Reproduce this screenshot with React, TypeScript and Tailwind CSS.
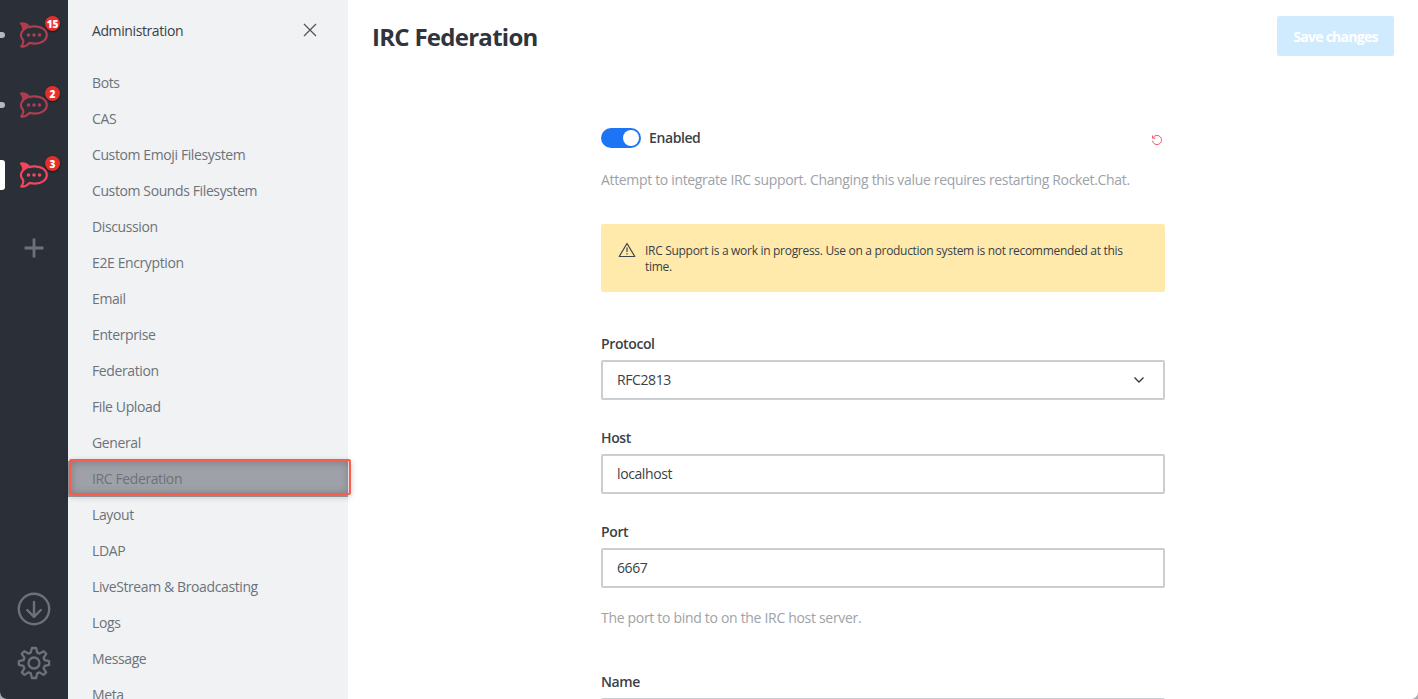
import { useState } from 'react';

const menu = [
  'Bots', 'CAS', 'Custom Emoji Filesystem', 'Custom Sounds Filesystem', 'Discussion', 'E2E Encryption',
  'Email', 'Enterprise', 'Federation', 'File Upload', 'General', 'IRC Federation', 'Layout', 'LDAP',
  'LiveStream & Broadcasting', 'Logs', 'Message', 'Meta',
];

function Rocket() {
  return (
    <svg width="30" height="28" viewBox="0 0 30 28" fill="none" stroke="#f5455c" strokeLinejoin="round">
      <path
        d="M2 1.500C5.400 1.200 8.600 2.800 10.200 5.100C12 4.500 14 4.300 16 4.400C23 4.600 27.800 8.200 27.800 13C27.800 17.900 22.800 21.600 16 21.600C14 21.600 12.200 21.400 10.400 20.900C8.200 23.200 5 25 2.200 24.400C3.800 22.500 4.700 20.100 4.100 17.900C2.600 16.300 1.900 14.800 1.900 12.900C1.900 11 2.900 9.400 4.300 7.900C4.600 5.300 3.600 3 2 1.500Z"
        strokeWidth="2.200"
      />
      <path d="M2.500 1.800C5 1.800 8 3.400 9.700 5.400L5 8.200C5.200 5.400 4.500 3.400 2.500 1.800Z" fill="#f5455c" strokeWidth="0.800" />
      <g fill="#f5455c" stroke="none">
        <circle cx="9.500" cy="13" r="1.800" />
        <circle cx="15" cy="13" r="1.800" />
        <circle cx="20.500" cy="13" r="1.800" />
      </g>
    </svg>
  );
}

function Server({ count, active = false }: { count: number; active?: boolean }) {
  return (
    <div className="relative flex h-[70px] w-full items-center justify-center">
      <span
        className={
          active
            ? 'absolute left-0 top-[20px] h-[30px] w-[5px] rounded-r-[3px] bg-white'
            : 'absolute left-0 top-[32px] h-[6px] w-[5px] rounded-r-[3px] bg-[#b4b7bb]'
        }
      />
      <span className={active ? 'pt-[1px]' : 'pt-[1px] opacity-65'}>
        <Rocket />
      </span>
      <span className="absolute left-[45px] top-[16px] flex h-[15px] w-[15px] items-center justify-center rounded-full bg-[#e5302a] font-['Open_Sans',sans-serif] text-[10px] font-extrabold leading-none text-white shadow-[0_1px_2px_rgba(0,0,0,0.5)]">
        {count}
      </span>
    </div>
  );
}

function Field({ label, value, select = false }: { label: string; value: string; select?: boolean }) {
  return (
    <div className="h-[94px]">
      <label className="block h-[26px] text-[14px] font-semibold leading-[20px] tracking-[-0.380px] text-[#3a3f48]">{label}</label>
      <div className="flex h-10 items-center justify-between rounded-[2px] border-2 border-[#cbced1] pl-[14px] pr-[18px] text-[14px] tracking-[-0.400px] text-[#3a3f48]">
        <span className="pb-[2px]">{value}</span>
        {select && (
          <svg width="12" height="8" viewBox="0 0 12 8" fill="none" stroke="#2f343d" strokeWidth="1.300">
            <path d="M1.500 1.500L6 6L10.500 1.500" />
          </svg>
        )}
      </div>
    </div>
  );
}

export default function App() {
  const [selected, setSelected] = useState('IRC Federation');
  return (
    <div className="h-[699px] w-full overflow-hidden bg-[#a9abae] font-['Open_Sans','Noto_Sans',sans-serif]">
      <div className="flex h-full overflow-hidden rounded-b-[7px] bg-white">
        <aside className="flex w-[68px] shrink-0 flex-col items-center bg-[#2b2f38]">
          <Server count={15} />
          <Server count={2} />
          <Server count={3} active />
          <svg className="mt-[28px]" width="20" height="20" viewBox="0 0 20 20" stroke="#6c727a" strokeWidth="2.800">
            <path d="M10 .500V19.500M.500 10H19.500" />
          </svg>
          <div className="mt-auto flex flex-col items-center gap-5 pb-[19px]">
            <svg width="34" height="34" viewBox="0 0 34 34" fill="none" stroke="#6c727a" strokeWidth="2.400" strokeLinecap="round" strokeLinejoin="round">
              <circle cx="17" cy="17" r="15.200" />
              <path d="M17 10V24.500M10.200 18L17 24.800L23.800 18" />
            </svg>
            <svg width="34" height="34" viewBox="0 0 34 34" fill="none" stroke="#6c727a" strokeWidth="2.300" strokeLinejoin="round">
              <path d="M14.900 2H19.100L20.300 6.600L22.600 7.600L26.700 5.200L29.300 7.800L26.600 11.700L27.600 14.200L32.100 15.100V18.900L27.600 19.900L26.600 22.400L29.200 26.300L26.500 28.900L22.600 26.400L20.200 27.400L19.100 32H14.900L13.800 27.400L11.400 26.400L7.500 28.900L4.800 26.300L7.400 22.400L6.400 19.900L1.900 18.900V15.100L6.400 14.200L7.400 11.700L4.700 7.800L7.300 5.200L11.400 7.600L13.700 6.600Z" />
              <circle cx="17" cy="17" r="5.500" />
            </svg>
          </div>
        </aside>

        <nav className="w-[280px] shrink-0 bg-[#f1f2f4]">
          <div className="flex h-[65px] items-start justify-between pl-6 pr-[31px] pt-[21px] text-[14px] leading-5 tracking-[-0.400px] text-[#3a3f48]">
            <span>Administration</span>
            <svg className="mt-[2px]" width="14" height="14" viewBox="0 0 14 14" stroke="#50555e" strokeWidth="1.300">
              <path d="M1 1L13 13M13 1L1 13" />
            </svg>
          </div>
          <ul>
            {menu.map((m) => (
              <li key={m} className="relative">
                <button
                  onClick={() => setSelected(m)}
                  className={
                    m === selected
                      ? 'flex h-9 w-full items-center bg-[#9ea2a8] pb-[2px] pl-6 text-[14px] tracking-[-0.390px] text-[#6c727a]'
                      : 'flex h-9 w-full items-center pb-[2px] pl-6 text-[14px] tracking-[-0.390px] text-[#6c727a]'
                  }
                >
                  {m}
                </button>
                {m === selected && (
                  <span className="pointer-events-none absolute left-[1px] top-[-2px] z-10 h-[36px] w-[282px] rounded-[2px] border-2 border-[#fb5b4b] shadow-[0_2px_6px_rgba(0,0,0,0.2),inset_0_1px_8px_rgba(0,0,0,0.25)]" />
                )}
              </li>
            ))}
          </ul>
        </nav>

        <main className="min-w-0 flex-1">
          <header className="flex h-[128px] items-start justify-between pl-6 pr-6 pt-4">
            <h1 className="pt-[5px] text-[24px] font-bold leading-8 tracking-[-0.730px] text-[#2f343d]">IRC Federation</h1>
            <button className="h-10 w-[117px] rounded-[2px] bg-[#d1ebfe] text-[14px] font-bold tracking-[-0.730px] text-white">Save changes</button>
          </header>
          <section className="ml-[253px] w-[564px]">
            <div className="flex h-5 items-center">
              <span className="flex h-5 w-10 items-center justify-end rounded-full bg-[#1d74f5] pr-[2px]">
                <span className="h-4 w-4 rounded-full bg-white" />
              </span>
              <span className="ml-2 pb-[2px] text-[14px] font-semibold tracking-[-0.400px] text-[#3a3f48]">Enabled</span>
              <svg className="ml-auto mr-[2px] mt-[3px]" width="12" height="12" viewBox="0 0 12 12" fill="none" stroke="#f5596c" strokeWidth="1">
                <path d="M1.500 1.500V4.200H4.300M1.800 4A4.600 4.600 0 1 1 1.400 6.700" />
              </svg>
            </div>
            <p className="mt-[22px] whitespace-nowrap text-[14px] leading-5 tracking-[-0.335px] text-[#9ea2a8]">
              Attempt to integrate IRC support. Changing this value requires restarting Rocket.Chat.
            </p>
            <div className="mt-[34px] flex h-[68px] rounded-[2px] bg-[#ffeaab] pl-[17px] pt-[18px]">
              <svg width="18" height="16" viewBox="0 0 18 16" fill="none" stroke="#40444b" strokeWidth="1.200" strokeLinejoin="round">
                <path d="M9 1.500L16.800 14.500H1.200ZM9 5.500V10M9 11.300V12.600" />
              </svg>
              <p className="ml-[9px] pt-px text-[12px] leading-4 tracking-[-0.300px] text-[#3a3f48]">
                IRC Support is a work in progress. Use on a production system is not recommended at this
                <br />
                time.
              </p>
            </div>
            <div className="mt-[42px]">
              <Field label="Protocol" value="RFC2813" select />
              <Field label="Host" value="localhost" />
              <Field label="Port" value="6667" />
              <p className="-mt-[8px] mb-[44px] text-[14px] leading-5 tracking-[-0.310px] text-[#9ea2a8]">The port to bind to on the IRC host server.</p>
              <Field label="Name" value="" />
            </div>
          </section>
        </main>
      </div>
    </div>
  );
}
